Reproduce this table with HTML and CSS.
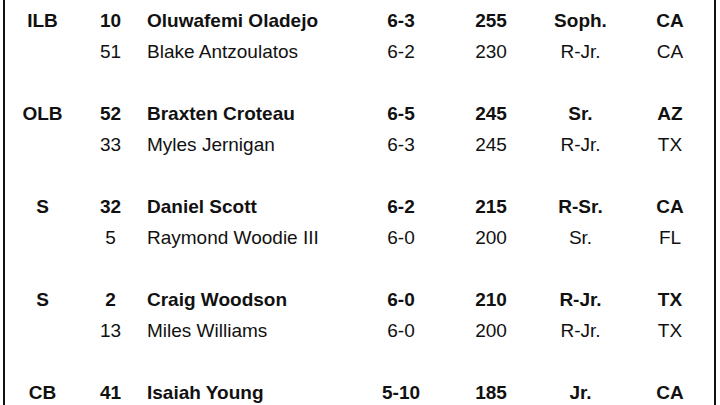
FILE: index.html
```html
<!DOCTYPE html>
<html>
<head>
<meta charset="utf-8">
<link rel="stylesheet" href="styles.css">
</head>
<body>
<div class="sheet">
  <div class="group">
    <div class="row starter"><span class="pos">ILB</span><span class="num">10</span><span class="name">Oluwafemi Oladejo</span><span class="ht">6-3</span><span class="wt">255</span><span class="cls">Soph.</span><span class="st">CA</span></div>
    <div class="row"><span class="pos"></span><span class="num">51</span><span class="name">Blake Antzoulatos</span><span class="ht">6-2</span><span class="wt">230</span><span class="cls">R-Jr.</span><span class="st">CA</span></div>
  </div>
  <div class="group">
    <div class="row starter"><span class="pos">OLB</span><span class="num">52</span><span class="name">Braxten Croteau</span><span class="ht">6-5</span><span class="wt">245</span><span class="cls">Sr.</span><span class="st">AZ</span></div>
    <div class="row"><span class="pos"></span><span class="num">33</span><span class="name">Myles Jernigan</span><span class="ht">6-3</span><span class="wt">245</span><span class="cls">R-Jr.</span><span class="st">TX</span></div>
  </div>
  <div class="group">
    <div class="row starter"><span class="pos">S</span><span class="num">32</span><span class="name">Daniel Scott</span><span class="ht">6-2</span><span class="wt">215</span><span class="cls">R-Sr.</span><span class="st">CA</span></div>
    <div class="row"><span class="pos"></span><span class="num">5</span><span class="name">Raymond Woodie III</span><span class="ht">6-0</span><span class="wt">200</span><span class="cls">Sr.</span><span class="st">FL</span></div>
  </div>
  <div class="group">
    <div class="row starter"><span class="pos">S</span><span class="num">2</span><span class="name">Craig Woodson</span><span class="ht">6-0</span><span class="wt">210</span><span class="cls">R-Jr.</span><span class="st">TX</span></div>
    <div class="row"><span class="pos"></span><span class="num">13</span><span class="name">Miles Williams</span><span class="ht">6-0</span><span class="wt">200</span><span class="cls">R-Jr.</span><span class="st">TX</span></div>
  </div>
  <div class="group">
    <div class="row starter"><span class="pos">CB</span><span class="num">41</span><span class="name">Isaiah Young</span><span class="ht">5-10</span><span class="wt">185</span><span class="cls">Jr.</span><span class="st">CA</span></div>
  </div>
</div>
</body>
</html>
```
FILE: styles.css
```css
html, body {
  margin: 0;
  padding: 0;
  background: #fff;
}
body {
  width: 720px;
  height: 405px;
  overflow: hidden;
  font-family: "Liberation Sans", Arial, sans-serif;
  font-size: 19px;
  color: #111;
}
.sheet {
  margin-left: 3px;
  width: 713px;
  height: 405px;
  border-left: 2px solid #111;
  border-right: 2px solid #111;
  padding-top: 5px;
  box-sizing: border-box;
  overflow: hidden;
}
.group {
  height: 93px;
}
.row {
  display: grid;
  grid-template-columns: 75px 61px 219px 82px 98px 81px 93px;
  height: 31px;
  line-height: 31px;
  white-space: nowrap;
}
.starter {
  font-weight: bold;
}
.row span {
  text-align: center;
}
.row .name {
  text-align: left;
  padding-left: 6px;
}
.row .st {
  padding-left: 5px;
}
```
